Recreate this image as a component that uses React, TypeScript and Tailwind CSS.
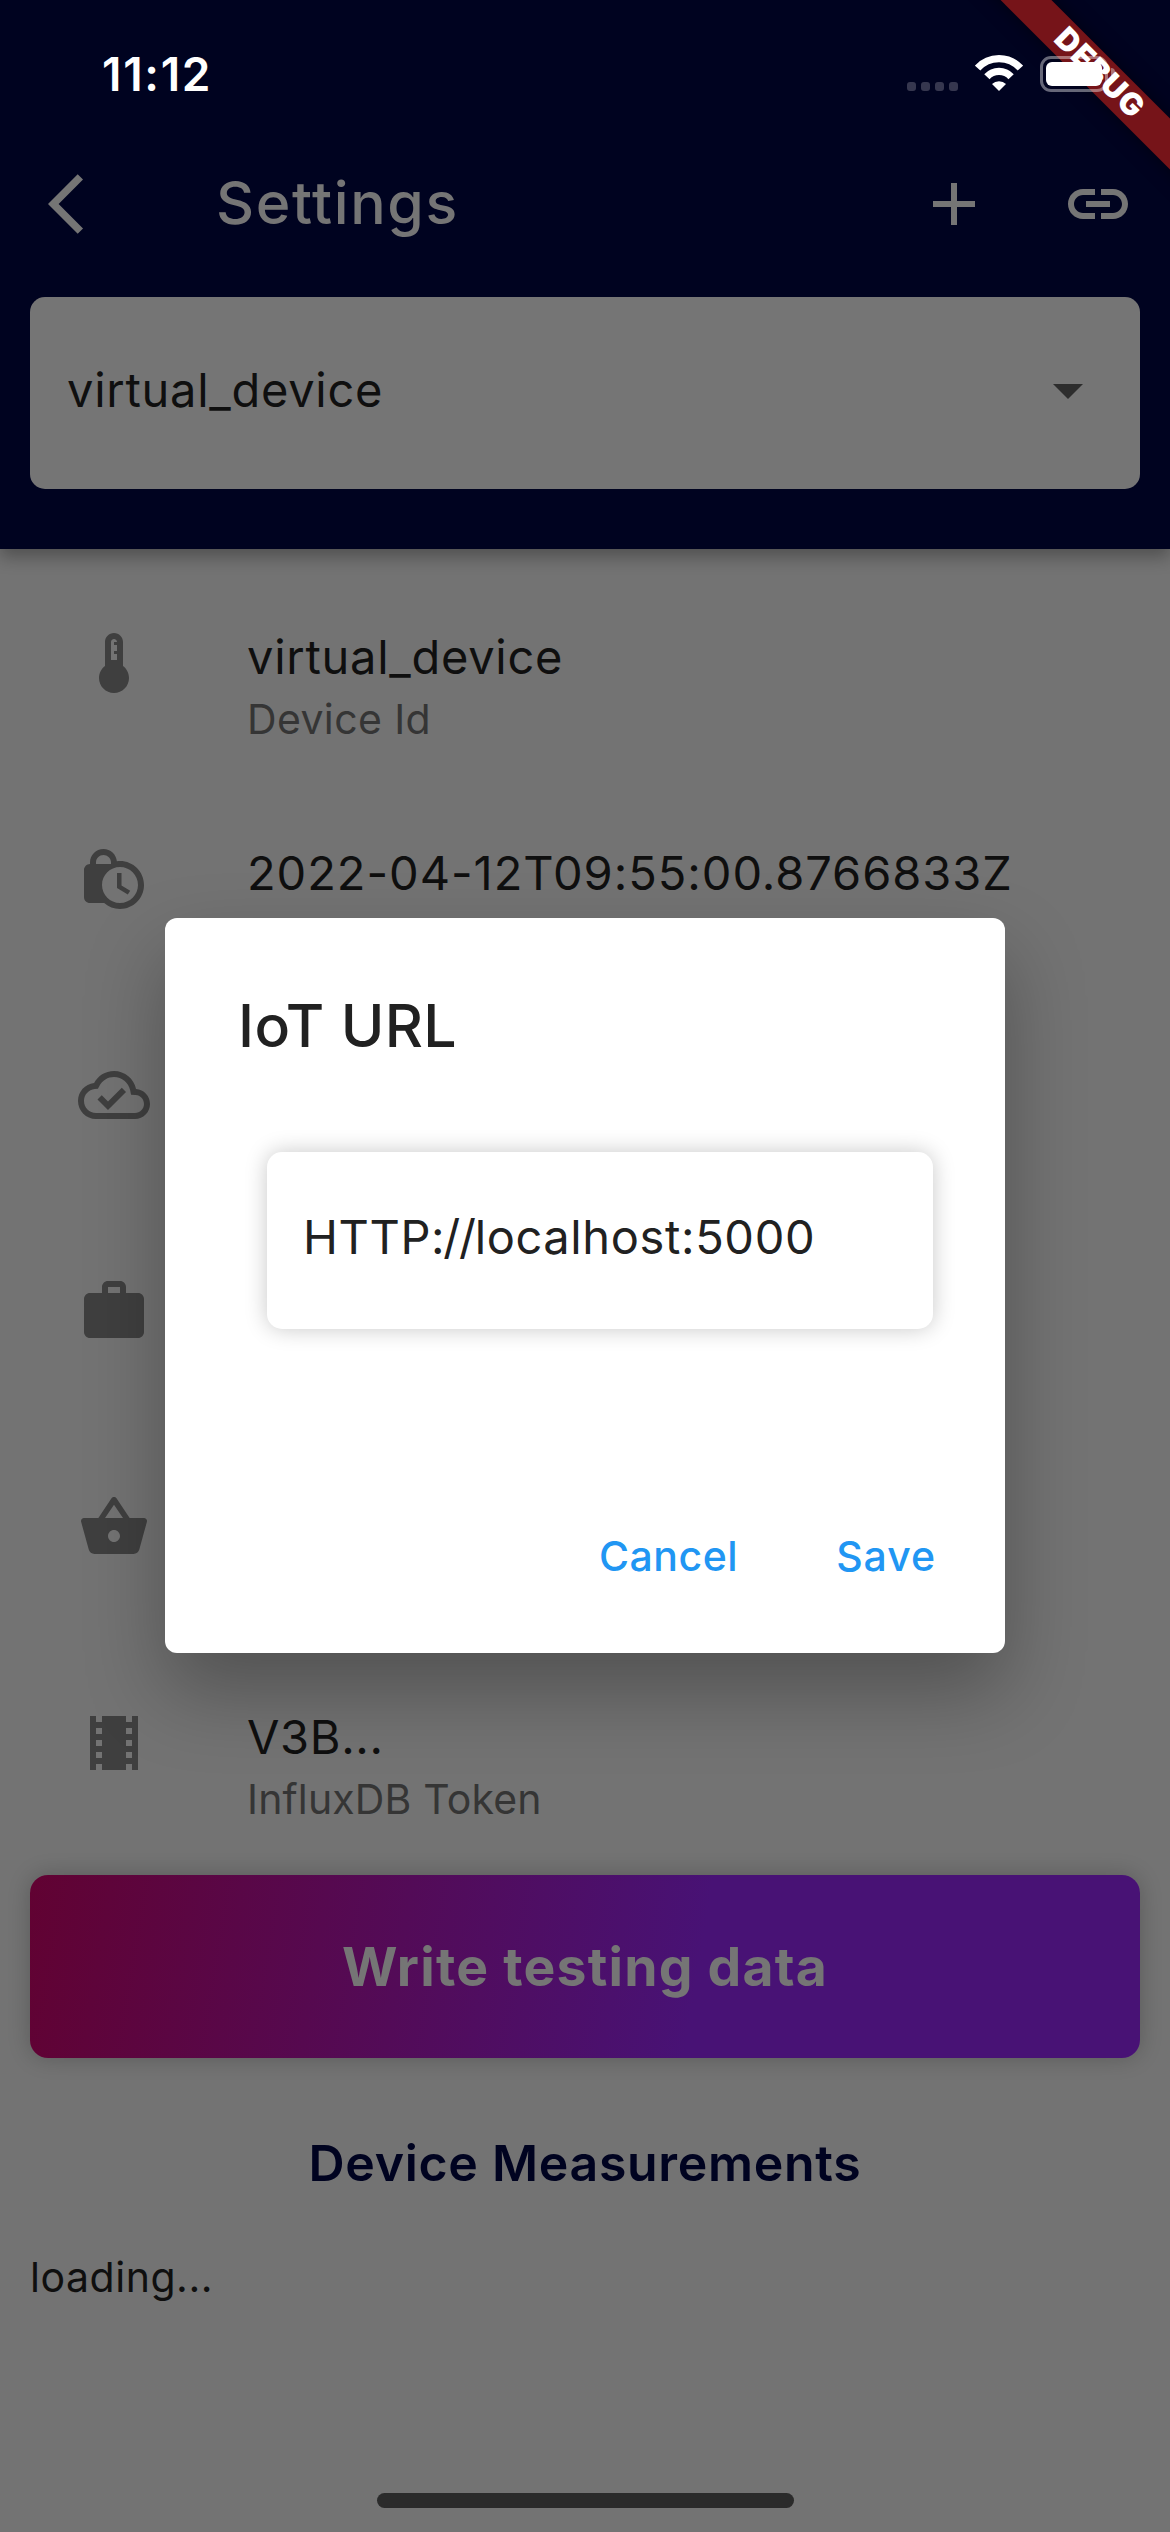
type IconProps = { d: string; className?: string };

/** Material icon drawn on the standard 24-unit grid. */
function Icon({ d, className = "" }: IconProps) {
  return (
    <svg viewBox="0 0 24 24" fill="currentColor" className={`size-[72px] shrink-0 ${className}`}>
      <path d={d} />
    </svg>
  );
}

const icons = {
  back: "M11.67 3.87L9.9 2.1 0 12l9.9 9.9 1.77-1.77L3.54 12z",
  add: "M19 13h-6v6h-2v-6H5v-2h6V5h2v6h6v2z",
  link: "M17 7h-4v2h4c1.65 0 3 1.35 3 3s-1.35 3-3 3h-4v2h4c2.76 0 5-2.24 5-5s-2.24-5-5-5zm-6 8H7c-1.65 0-3-1.35-3-3s1.35-3 3-3h4V7H7c-2.76 0-5 2.24-5 5s2.24 5 5 5h4v-2zm-3-4h8v2H8z",
  dropDown: "M7 10l5 5 5-5z",
  thermostat:
    "M15 13V5c0-1.66-1.34-3-3-3S9 3.34 9 5v8c-1.21.91-2 2.37-2 4 0 2.76 2.24 5 5 5s5-2.24 5-5c0-1.63-.79-3.09-2-4zm-4-8c0-.55.45-1 1-1s1 .45 1 1h-1v1h1v2h-1v1h1v2h-2V5z",
  lockClock:
    "M14.5 14.2l2.9 1.7-.8 1.3L13 15v-5h1.5v4.2zM22 14c0 4.41-3.59 8-8 8-2.02 0-3.86-.76-5.27-2H4c-1.15 0-2-.85-2-2V9c0-1.12.89-1.96 2-2v-.5C4 4.01 6.01 2 8.5 2c2.34 0 4.24 1.79 4.46 4.08.34-.05.69-.08 1.04-.08 4.41 0 8 3.59 8 8zM6 7h5v-.74C10.88 4.99 9.8 4 8.5 4 7.12 4 6 5.12 6 6.5V7zm14 7c0-3.31-2.69-6-6-6s-6 2.69-6 6 2.69 6 6 6 6-2.69 6-6z",
  cloudDone:
    "M19.35 10.04C18.67 6.59 15.64 4 12 4 9.11 4 6.61 5.64 5.36 8.04 2.34 8.36 0 10.91 0 14c0 3.31 2.69 6 6 6h13c2.76 0 5-2.24 5-5 0-2.64-2.05-4.78-4.65-4.96zM19 18H6c-2.21 0-4-1.79-4-4 0-2.05 1.53-3.76 3.56-3.97l1.07-.11.5-.95C8.08 7.14 9.94 6 12 6c2.62 0 4.88 1.86 5.39 4.43l.3 1.5 1.53.11c1.56.1 2.78 1.41 2.78 2.96 0 1.65-1.35 3-3 3zm-9-3.82l-2.09-2.09L6.5 13.5 10 17l6.01-6.01-1.41-1.41z",
  work: "M20 6h-4V4c0-1.11-.89-2-2-2h-4c-1.11 0-2 .89-2 2v2H4c-1.11 0-1.99.89-1.99 2L2 19c0 1.11.89 2 2 2h16c1.11 0 2-.89 2-2V8c0-1.11-.89-2-2-2zm-6 0h-4V4h4v2z",
  basket:
    "M17.21 9l-4.38-6.56c-.19-.28-.51-.42-.83-.42-.32 0-.64.14-.83.43L6.79 9H2c-.55 0-1 .45-1 1 0 .09.01.18.04.27l2.54 9.27c.23.84 1 1.46 1.92 1.46h13c.92 0 1.69-.62 1.93-1.46l2.54-9.27L23 10c0-.55-.45-1-1-1h-4.79zM9 9l3-4.4L15 9H9zm3 8c-1.1 0-2-.9-2-2s.9-2 2-2 2 .9 2 2-.9 2-2 2z",
  theaters:
    "M18 3v2h-2V3H8v2H6V3H4v18h2v-2h2v2h8v-2h2v2h2V3h-2zM8 17H6v-2h2v2zm0-4H6v-2h2v2zm0-4H6V7h2v2zm10 8h-2v-2h2v2zm0-4h-2v-2h2v2zm0-4h-2V7h2v2z",
};

type Row = { icon: string; title?: string; titleClass?: string; subtitle?: string; subtitleClass?: string };

const rows: Row[] = [
  {
    icon: icons.thermostat,
    title: "virtual_device",
    titleClass: "tracking-[0.73px]",
    subtitle: "Device Id",
    subtitleClass: "tracking-[0.38px]",
  },
  { icon: icons.lockClock, title: "2022-04-12T09:55:00.8766833Z", titleClass: "tracking-[0.96px]" },
  { icon: icons.cloudDone },
  { icon: icons.work },
  { icon: icons.basket },
  {
    icon: icons.theaters,
    title: "V3B...",
    titleClass: "tracking-[0.65px]",
    subtitle: "InfluxDB Token",
    subtitleClass: "tracking-[0.15px]",
  },
];

function StatusBar() {
  return (
    <div className="relative z-20 flex h-[148px] items-center justify-between pr-[55px] pl-[102px] text-white">
      <span className="text-[46px] leading-[60px] font-semibold tracking-[1.69px]">11:12</span>
      <div className="flex items-center">
        <div className="mt-[25px] flex gap-[5px]">
          {[0, 1, 2, 3].map((i) => (
            <span key={i} className="size-[9px] rounded-[3px] bg-[#36374f]" />
          ))}
        </div>
        <svg viewBox="0 0 48 36" className="-mt-[2px] mr-[17px] ml-[17px] h-[36px] w-[48px]" fill="none">
          <path d="M2.6 13.1A29 29 0 0 1 45.4 13.1" stroke="white" strokeWidth="7.3" />
          <path d="M11.9 21.7A16.4 16.4 0 0 1 36.1 21.7" stroke="white" strokeWidth="7.2" />
          <path d="M24 36L17 29.1A9.8 9.8 0 0 1 31 29.1Z" fill="white" />
        </svg>
        <div className="flex items-center gap-[3px]">
          <div className="h-[36px] w-[68px] rounded-[11px] border-[3px] border-white/40 p-[3px]">
            <div className="h-full w-full rounded-[6px] bg-white" />
          </div>
          <div className="h-[12px] w-[4px] rounded-r-full bg-white/40" />
        </div>
      </div>
    </div>
  );
}

function DebugBanner() {
  return (
    <div className="absolute top-0 right-0 z-10 size-[240px] overflow-hidden">
      <div className="absolute top-[54px] -right-[128px] flex h-[36px] w-[400px] rotate-45 items-center justify-center bg-[#761419] pb-[3px] pl-[4px] text-[31px] leading-[33px] font-black tracking-[1px] text-white shadow-[0_0_18px_rgba(0,0,0,0.5)]">
        DEBUG
      </div>
    </div>
  );
}

function Header() {
  return (
    <header className="relative h-[549px] bg-[#000320] shadow-[0_8px_16px_rgba(0,0,0,0.3)]">
      <StatusBar />
      <div className="flex h-[112px] items-center pr-9 pl-12 text-[#757575]">
        <Icon d={icons.back} />
        <h1 className="ml-24 grow pb-0.5 text-[59px] leading-[72px] font-medium tracking-[1.6px]">Settings</h1>
        <Icon d={icons.add} className="mr-[72px]" />
        <Icon d={icons.link} />
      </div>
      <div className="mx-[30px] mt-[37px] flex h-[192px] items-center justify-between rounded-[15px] bg-[#757575] pr-9 pb-1.5 pl-[37px]">
        <span className="text-[47px] leading-[60px] tracking-[0.73px] text-[#0f0f0f]">virtual_device</span>
        <Icon d={icons.dropDown} className="text-[#2d2d2d]" />
      </div>
    </header>
  );
}

function DeviceInfo() {
  return (
    <ul className="flex flex-col gap-12 pt-[78px] pl-[78px]">
      {rows.map((row, i) => (
        <li key={i} className="flex h-[168px] gap-[97px]">
          <Icon d={row.icon} className="text-[#3f3f3f]" />
          <div>
            {row.title && (
              <p className={`text-[47px] leading-[60px] text-[#0f0f0f] ${row.titleClass}`}>{row.title}</p>
            )}
            {row.subtitle && (
              <p className={`text-[41px] leading-[65px] text-[#353535] ${row.subtitleClass}`}>{row.subtitle}</p>
            )}
          </div>
        </li>
      ))}
    </ul>
  );
}

function UrlDialog() {
  return (
    <div className="absolute inset-0 flex items-start justify-center pt-[918px]">
      <div
        role="dialog"
        className="h-[735px] w-[840px] rounded-[12px] bg-white pt-[72px] shadow-[0_38px_80px_rgba(0,0,0,0.29)]"
      >
        <h2 className="pl-[73px] text-[59px] leading-[72px] font-medium tracking-[0.35px] text-[#212121]">IoT URL</h2>
        <div className="mt-[90px] ml-[102px] flex h-[177px] w-[666px] items-center rounded-[15px] bg-white pb-[7px] pl-9 shadow-[0_0_22px_rgba(0,0,0,0.22)]">
          <p className="text-[47px] leading-[60px] tracking-[0.62px] text-[#212121]">
            HTTP<span className="tracking-[-1.3px]">://</span>localhost:5000
          </p>
        </div>
        <div className="mt-[197px] flex justify-end gap-[98px] pr-[69px] text-[41px] leading-[60px] font-medium text-[#2196f3]">
          <button className="tracking-[0.52px]">Cancel</button>
          <button className="tracking-[0.96px]">Save</button>
        </div>
      </div>
    </div>
  );
}

export default function App() {
  return (
    <div className="relative flex h-[2532px] w-[1170px] flex-col overflow-hidden bg-[#737373] font-['Inter',sans-serif]">
      <Header />
      <DeviceInfo />
      <button className="mx-[30px] h-[183px] rounded-[18px] bg-[linear-gradient(99.36deg,#610232_0%,#481275_60%)] text-[53.5px] leading-[60px] font-bold tracking-[1.2px] text-[#757575] shadow-[0_0_22px_rgba(0,0,0,0.22)]">
        Write testing data
      </button>
      <h2 className="mt-[69px] text-center text-[50px] leading-[72px] font-[560] tracking-[0.7px] text-[#000320]">
        Device Measurements
      </h2>
      <p className="mt-12 pl-[30px] text-[41px] leading-[60px] tracking-[0.54px] text-[#0f0f0f]">loading...</p>
      <div className="mt-auto mb-6 ml-[377px] h-[15px] w-[417px] rounded-full bg-[#2b2b2b]" />
      <UrlDialog />
      <DebugBanner />
    </div>
  );
}
